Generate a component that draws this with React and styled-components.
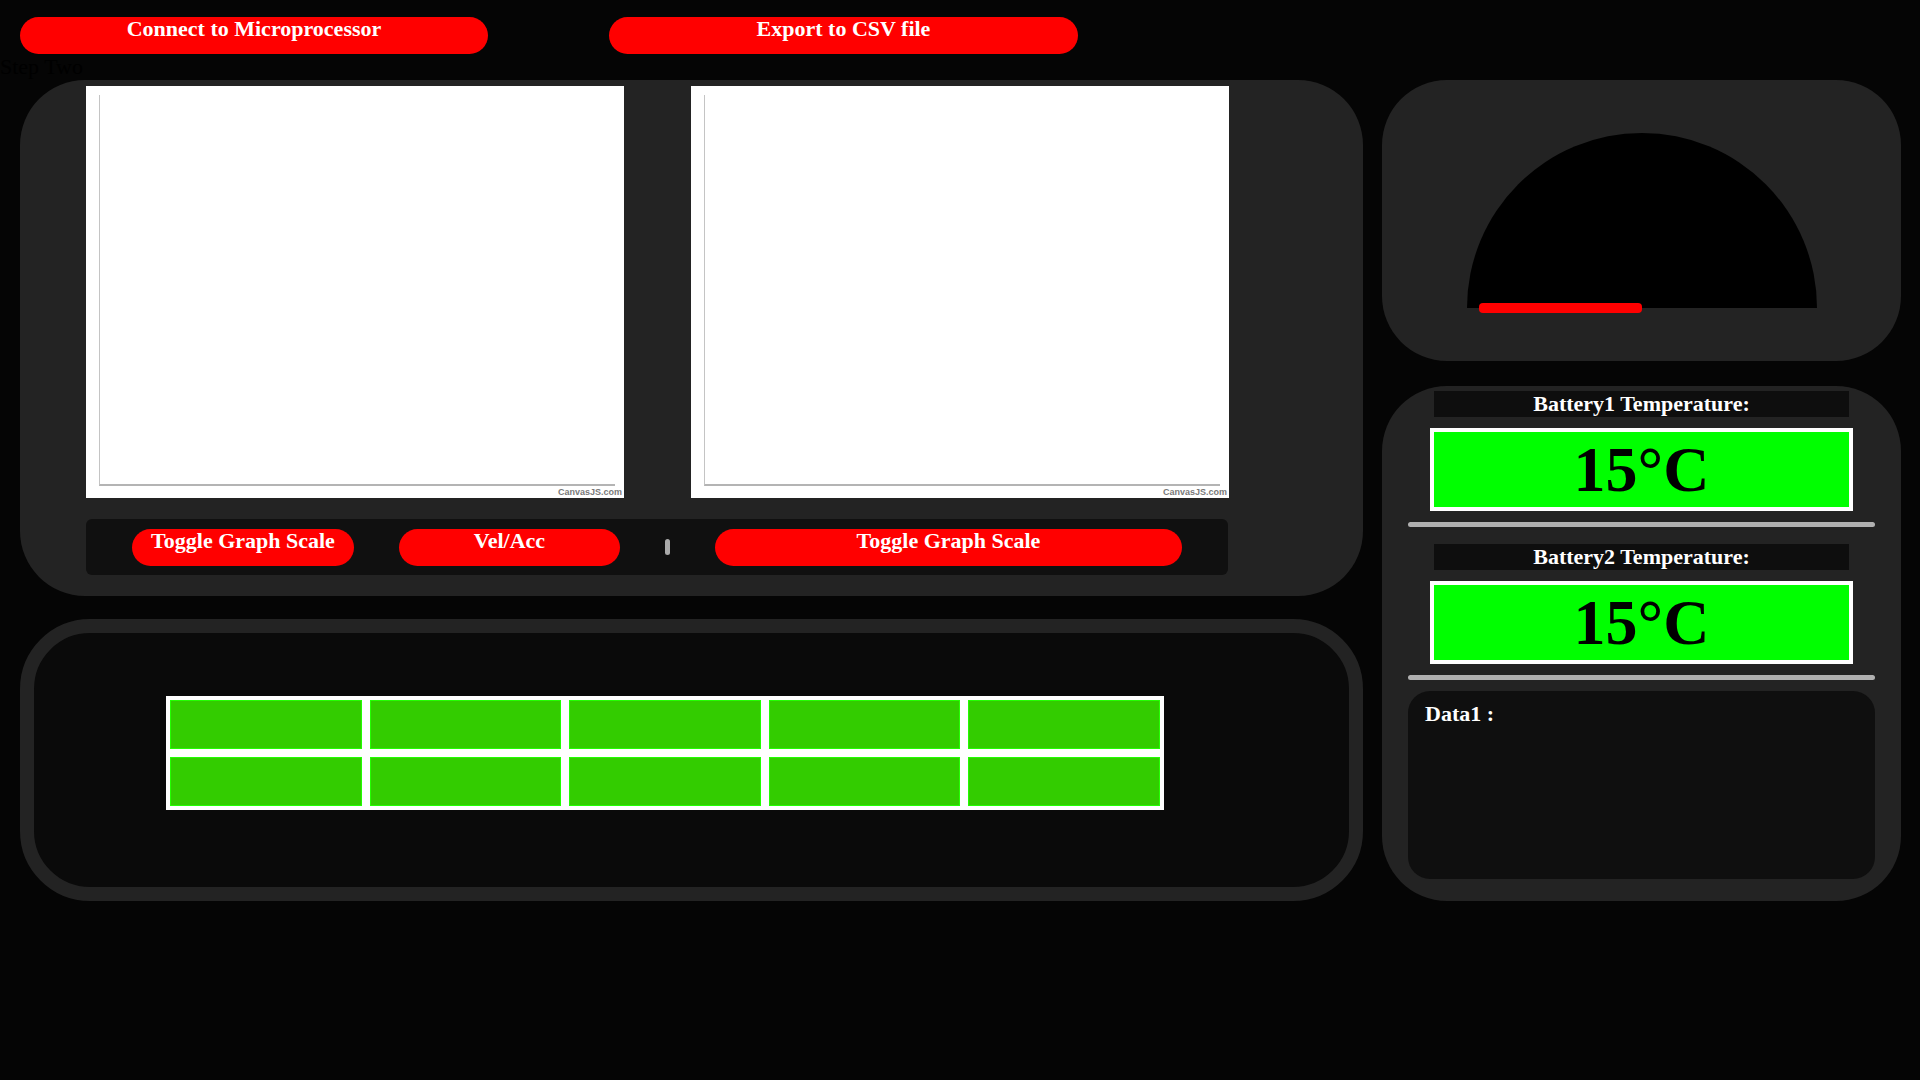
import React from "react";
import styled, { createGlobalStyle } from "styled-components";

const GlobalStyle = createGlobalStyle`
  body {
    margin: 0;
    background: #050505;
    font-family: "Liberation Serif", "Times New Roman", serif;
  }
`;

const Page = styled.div`
  min-height: 100vh;
  padding-top: 17px;
  box-sizing: border-box;
`;

const TopBar = styled.div`
  display: flex;
  gap: 121px;
  padding-left: 20px;
`;

const PillButton = styled.button`
  width: ${(p) => p.$w}px;
  height: 37px;
  padding: 1px 0 0;
  border: none;
  border-radius: 19px;
  background: #ff0000;
  color: #fff;
  font-family: "Liberation Serif", "Times New Roman", serif;
  font-weight: bold;
  font-size: 22px;
  line-height: 22px;
  display: flex;
  justify-content: center;
  align-items: flex-start;
  cursor: pointer;
`;

const StepLabel = styled.div`
  height: 26px;
  font-size: 22px;
  line-height: 25px;
  color: #000;
`;

const Layout = styled.div`
  display: grid;
  grid-template-columns: 1343px 519px;
  column-gap: 19px;
  padding-left: 20px;
  align-items: start;
`;

const Column = styled.div`
  display: flex;
  flex-direction: column;
  gap: ${(p) => p.$gap}px;
`;

const GraphPanel = styled.section`
  background: #232323;
  border-radius: 65px;
  padding: 6px 0 21px 66px;
`;

const ChartRow = styled.div`
  display: flex;
  gap: 67px;
`;

const Chart = styled.div`
  width: 538px;
  height: 412px;
  background: #fff;
  display: flex;
  flex-direction: column;
  padding: 9px 0 0 13px;
  box-sizing: border-box;
`;

const Plot = styled.div`
  flex: 1;
  margin-right: 9px;
  border-left: 1px solid #c4c4c4;
  border-bottom: 2px solid #b4b4b4;
`;

const Credit = styled.span`
  align-self: flex-end;
  height: 12px;
  padding-right: 2px;
  font-family: "Liberation Sans", Arial, sans-serif;
  font-size: 9px;
  font-weight: bold;
  line-height: 12px;
  color: #7a7a7a;
`;

const ControlBar = styled.div`
  margin-top: 21px;
  width: 1142px;
  height: 56px;
  background: #101010;
  border-radius: 6px;
  display: flex;
  align-items: center;
  gap: 45px;
  padding-left: 46px;
  box-sizing: border-box;
`;

const Thumb = styled.span`
  width: 5px;
  height: 16px;
  background: #aaa;
  border-radius: 3px;
`;

const StatusPanel = styled.section`
  height: 282px;
  box-sizing: border-box;
  border: 14px solid #232323;
  border-radius: 70px;
  background: #0a0a0a;
  padding: 63px 0 0 132px;
`;

const LightGrid = styled.div`
  width: 998px;
  display: grid;
  grid-template-columns: repeat(5, 1fr);
  gap: 8px;
  padding: 4px;
  background: #fff;
  box-sizing: border-box;
`;

const Light = styled.div`
  height: 49px;
  box-sizing: border-box;
  background: #33cc00;
  border: 1px solid #22ff00;
`;

const GaugePanel = styled.section`
  height: 281px;
  background: #232323;
  border-radius: 65px;
  display: flex;
  justify-content: center;
  align-items: flex-start;
  padding-top: 52px;
  box-sizing: border-box;
`;

const BatteryPanel = styled.section`
  height: 515px;
  box-sizing: border-box;
  background: #232323;
  border-radius: 65px;
  padding: 5px 26px 22px;
  display: flex;
  flex-direction: column;
  align-items: center;
`;

const TempLabel = styled.div`
  margin-top: ${(p) => p.$top || 0}px;
  width: 415px;
  height: 26px;
  background: #0e0e0e;
  color: #fff;
  font-weight: bold;
  font-size: 22px;
  line-height: 26px;
  text-align: center;
`;

const Reading = styled.div`
  margin-top: 11px;
  width: 423px;
  height: 83px;
  box-sizing: border-box;
  border: 4px solid #fff;
  background: #00ff00;
  color: #000;
  font-weight: bold;
  font-size: 64px;
  line-height: 75px;
  text-align: center;
`;

const Divider = styled.div`
  margin-top: 11px;
  align-self: stretch;
  height: 5px;
  background: #b0b0b0;
  border-radius: 3px;
`;

const DataBox = styled.div`
  margin-top: 11px;
  align-self: stretch;
  height: 188px;
  box-sizing: border-box;
  background: #0f0f0f;
  border-radius: 22px;
  padding: 10px 17px;
  color: #fff;
  font-weight: bold;
  font-size: 22px;
  line-height: 25px;
`;

const Gauge = () => (
  <svg width="350" height="182" viewBox="0 0 350 182">
    <path d="M0 176 A175 175 0 0 1 350 176 Z" fill="#000" />
    <rect x="12" y="171" width="163" height="10" rx="4" fill="#ff0000" />
  </svg>
);

const Graph = () => (
  <Chart>
    <Plot />
    <Credit>CanvasJS.com</Credit>
  </Chart>
);

const App = () => {
  const lights = Array.from({ length: 10 });

  return (
    <Page>
      <GlobalStyle />
      <TopBar>
        <PillButton $w={468}>Connect to Microprocessor</PillButton>
        <PillButton $w={469}>Export to CSV file</PillButton>
      </TopBar>
      <StepLabel>Step Two</StepLabel>
      <Layout>
        <Column $gap={23}>
          <GraphPanel>
            <ChartRow>
              <Graph />
              <Graph />
            </ChartRow>
            <ControlBar>
              <PillButton $w={222}>Toggle Graph Scale</PillButton>
              <PillButton $w={221}>Vel/Acc</PillButton>
              <Thumb />
              <PillButton $w={467}>Toggle Graph Scale</PillButton>
            </ControlBar>
          </GraphPanel>
          <StatusPanel>
            <LightGrid>
              {lights.map((_, i) => (
                <Light key={i} />
              ))}
            </LightGrid>
          </StatusPanel>
        </Column>
        <Column $gap={25}>
          <GaugePanel>
            <Gauge />
          </GaugePanel>
          <BatteryPanel>
            <TempLabel>Battery1 Temperature:</TempLabel>
            <Reading>15°C</Reading>
            <Divider />
            <TempLabel $top={17}>Battery2 Temperature:</TempLabel>
            <Reading>15°C</Reading>
            <Divider />
            <DataBox>Data1 :</DataBox>
          </BatteryPanel>
        </Column>
      </Layout>
    </Page>
  );
};

export default App;
